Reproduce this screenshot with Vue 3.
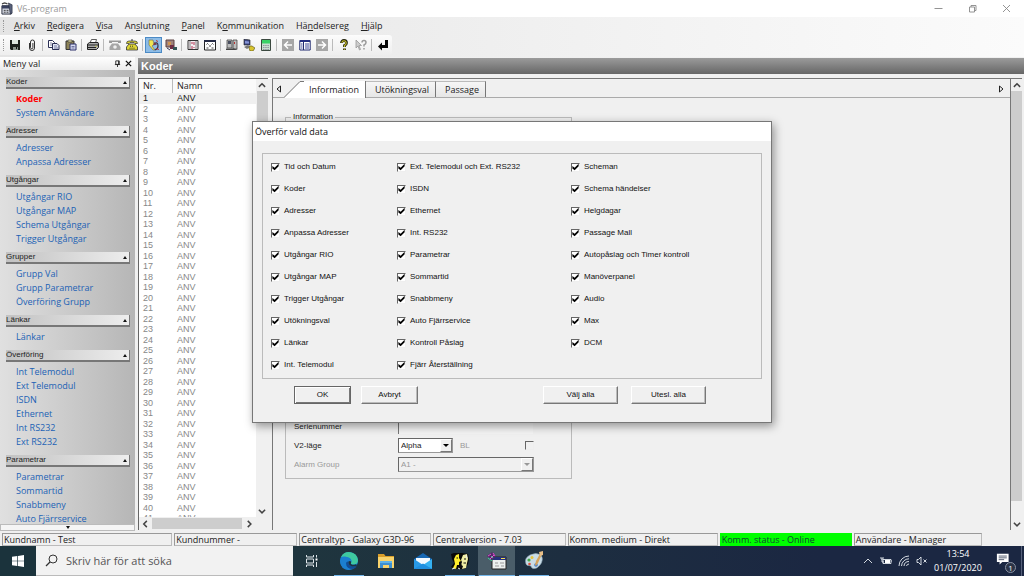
<script setup>
import { ref } from 'vue'

const menus = [
  ['', 'A', 'rkiv'], ['', 'R', 'edigera'], ['', 'V', 'isa'], ['An', 's', 'lutning'],
  ['', 'P', 'anel'], ['K', 'o', 'mmunikation'], ['Hä', 'n', 'delsereg'], ['', 'H', 'jälp'],
]

const sections = [
  { title: 'Koder', links: ['Koder', 'System Användare'] },
  { title: 'Adresser', links: ['Adresser', 'Anpassa Adresser'] },
  { title: 'Utgångar', links: ['Utgångar RIO', 'Utgångar MAP', 'Schema Utgångar', 'Trigger Utgångar'] },
  { title: 'Grupper', links: ['Grupp Val', 'Grupp Parametrar', 'Överföring Grupp'] },
  { title: 'Länkar', links: ['Länkar'] },
  { title: 'Överföring', links: ['Int Telemodul', 'Ext Telemodul', 'ISDN', 'Ethernet', 'Int RS232', 'Ext RS232'] },
  { title: 'Parametrar', links: ['Parametrar', 'Sommartid', 'Snabbmeny', 'Auto Fjärrservice'] },
]

const rows = Array.from({ length: 41 }, (_, i) => i + 1)

const columns = [
  ['Tid och Datum', 'Koder', 'Adresser', 'Anpassa Adresser', 'Utgångar RIO', 'Utgångar MAP', 'Trigger Utgångar', 'Utökningsval', 'Länkar', 'Int. Telemodul'],
  ['Ext. Telemodul och Ext. RS232', 'ISDN', 'Ethernet', 'Int. RS232', 'Parametrar', 'Sommartid', 'Snabbmeny', 'Auto Fjärrservice', 'Kontroll Påslag', 'Fjärr Återställning'],
  ['Scheman', 'Schema händelser', 'Helgdagar', 'Passage Mall', 'Autopåslag och Timer kontroll', 'Manöverpanel', 'Audio', 'Max', 'DCM'],
]
const picked = ref(columns.flat())
const selectAll = () => { picked.value = columns.flat() }
const clearAll = () => { picked.value = [] }

const mode = ref('Alpha')
const query = ref('')
</script>

<template>
  <div class="screen">
    <header class="titlebar">
      <svg class="appicon" viewBox="0 0 14 14">
        <path d="M1 4h10v9H1z" fill="#d4d8e2" stroke="#25293a" />
        <path d="M1 4h10v3H1z" fill="#38405e" />
        <path d="M8 1l4 2v9l-2 1z" fill="#59617a" stroke="#1d2233" stroke-width=".6" />
        <path d="M3 9h2M6 9h2M3 11h2M6 11h2" stroke="#333" />
        <path d="M1 2l3-1 3 1" fill="none" stroke="#444" stroke-width="1.300" />
      </svg>
      <span>V6-program</span>
      <div class="winbtns">
        <button aria-label="Minimera"><svg viewBox="0 0 9 9"><path d="M.5 4.500h8" /></svg></button>
        <button aria-label="Återställ"><svg viewBox="0 0 9 9"><path d="M1.500 3h5v5h-5zM3 3V1.500h5v5H6.500" /></svg></button>
        <button aria-label="Stäng"><svg viewBox="0 0 9 9"><path d="M1 1l7 7M8 1l-7 7" /></svg></button>
      </div>
    </header>

    <nav class="menubar">
      <i class="grip"></i>
      <button v-for="m in menus" :key="m.join('')">{{ m[0] }}<u>{{ m[1] }}</u>{{ m[2] }}</button>
    </nav>

    <div class="toolrow">
      <div class="toolbar">
        <i class="grip"></i>
        <button aria-label="Spara"><svg viewBox="0 0 12 12"><path d="M1 1h10v10H2l-1-1z" fill="#1c1f1c" /><path d="M3 1h6v4H3z" fill="#dfe6df" /><path d="M4 8h5v3H4z" fill="#8a938a" /><path d="M7 8h1v2H7z" fill="#111" /></svg></button>
        <button aria-label="Bifoga"><svg viewBox="0 0 12 12"><path d="M3.500 4v5a2.500 2.500 0 0 0 5 0V3a2 2 0 0 0-4 0v5.500a1.200 1.200 0 0 0 2.400 0V4" fill="none" stroke="#333" /></svg></button>
        <i class="sep"></i>
        <button aria-label="Kopiera"><svg viewBox="0 0 12 12"><path d="M.5 1.500h4l2 2v5h-6z" fill="#fff" stroke="#2a2f55" /><path d="M4.500 4.500H9l2 2v4H4.500z" fill="#dfe4f4" stroke="#2a2f55" /><path d="M2 4h2M2 6h2M6 7h3M6 9h4" stroke="#4a5280" stroke-width=".7" /></svg></button>
        <button aria-label="Klistra in"><svg viewBox="0 0 12 12"><path d="M1 2h8v8.500H1z" fill="#8d8357" stroke="#333" /><path d="M3 1h4v2H3z" fill="#e5dfa8" stroke="#333" stroke-width=".6" /><path d="M5 5h6v6H5z" fill="#d8dcf3" stroke="#2b2f68" /><path d="M6.500 7.500h3M6.500 9h3" stroke="#2b2f68" stroke-width=".6" /></svg></button>
        <i class="sep"></i>
        <button aria-label="Skriv ut"><svg viewBox="0 0 12 12"><path d="M3 4l1.500-3.500h5L8.500 4" fill="#fff" stroke="#333" stroke-width=".8" /><path d="M.5 5l2-1.500h8.500l.5 1.500v3.500l-2 2H.5z" fill="#aaa" stroke="#222" /><path d="M1 6h10M1 8.500h8" stroke="#222" /><path d="M8 7.200h2" stroke="#c8c860" /></svg></button>
        <i class="sep"></i>
        <button aria-label="Koppla ned"><svg viewBox="0 0 12 12"><path d="M0 1.500h12V4H9V3H3v1H0z" fill="#999" /><path d="M3 4.500h6l2.500 3.500v3H.5V8z" fill="#a6a6a6" /><circle cx="6" cy="8" r="1.800" fill="#eee" /></svg></button>
        <button aria-label="Ring upp"><svg viewBox="0 0 12 12"><path d="M.5 4.500Q.5 2 3 2h6q2.500 0 2.500 2.500H9l-1-1H4l-1 1z" fill="#d9d330" stroke="#333" stroke-width=".7" /><path d="M3 5h6l2.500 3v3H.5V8z" fill="#ded633" stroke="#333" stroke-width=".8" /><path d="M4 7.200h4M3.500 9.200h5" stroke="#333" stroke-dasharray="1 1" /><path d="M6 0v2" stroke="#333" /></svg></button>
        <i class="sep"></i>
        <button class="on" aria-label="Anslut"><svg viewBox="0 0 12 12"><path d="M1 1h4l1 4-2 2 3 4H5L1 6z" fill="#f0e451" stroke="#665" stroke-width=".6" /><path d="M6 5q4-3 4 2 0 3-3 4" fill="none" stroke="#3b3144" stroke-width="1.200" /><path d="M5 6.500L6.500 3 9 5.500z" fill="#7b3a48" /><path d="M8 1.500l2 1M8 9.500l3 1" stroke="#b33" /></svg></button>
        <button aria-label="Enheter"><svg viewBox="0 0 12 12"><path d="M1 1h8v7H1z" fill="#a0837c" stroke="#5a4040" /><path d="M3 3h3v3H3z" fill="#cf9450" /><path d="M5 6h4v4H5z" fill="#6e2e45" /><path d="M8 8h4v3H8z" fill="#355" /><path d="M2 9l3 2" stroke="#335" /></svg></button>
        <i class="sep"></i>
        <button aria-label="Logg"><svg viewBox="0 0 12 12"><path d="M1 1.500h10v9H1z" fill="#f4eef2" stroke="#333" /><path d="M3 2v8M9 2v8" stroke="#555" stroke-width=".7" /><path d="M5 3v2M7 3v3M5 7v3M7 8v1" stroke="#b23350" /></svg></button>
        <button aria-label="Fönster"><svg viewBox="0 0 12 12"><path d="M.5 1.500h11v9.500H.5z" fill="#fff" stroke="#222" /><path d="M0 1h12v2H0z" fill="#252a45" /><path d="M2.500 5.500l1-1 1 1M7.500 5.500l1-1 1 1M2.500 9h2M7.500 9h2M5 7h2" fill="none" stroke="#444" /></svg></button>
        <i class="sep"></i>
        <button aria-label="Centralapparat"><svg viewBox="0 0 12 12"><path d="M1 1h5v8H1zM7 1h4v9H7z" fill="#bcbcbc" stroke="#333" stroke-width=".7" /><path d="M2 2h3v3H2z" fill="#4a4f60" /><path d="M8 3h1v2H8z" fill="#b33" /><path d="M0 9.500h8l4 1.500H0z" fill="#444" /></svg></button>
        <button aria-label="Fjärranslutning"><svg viewBox="0 0 12 12"><path d="M1 0l6 1v5L1 6z" fill="#3d4780" stroke="#222" stroke-width=".6" /><path d="M2 2l4 .5v2L2 4.500z" fill="#8795d8" /><path d="M1 8l4-2 2 2-3 2z" fill="#777" /><path d="M6 9q0-3 3-2l3 2-2 3H7z" fill="#d8c42d" stroke="#554c11" stroke-width=".6" /></svg></button>
        <button aria-label="Knappsats"><svg viewBox="0 0 12 12"><path d="M1.500.5h9v11h-9z" fill="#c9ded0" stroke="#3b493f" /><path d="M2 1h8v3.500H2z" fill="#39d265" /><path d="M3 6.500h6M3 8.500h6M3 10.500h6" stroke="#778" stroke-width=".7" stroke-dasharray="1.500 .7" /></svg></button>
        <i class="sep"></i>
        <button aria-label="Föregående"><svg viewBox="0 0 12 12"><path d="M0 0h12v12H0z" fill="#a7a7a7" /><path d="M10 6H3M6 2.500L2.500 6 6 9.500" fill="none" stroke="#fff" stroke-width="1.500" /></svg></button>
        <button aria-label="Lista"><svg viewBox="0 0 12 12"><path d="M.8 1.500h10.400v9.500H.8z" fill="#fff" stroke="#202a70" /><path d="M1 1h10v2H1z" fill="#252f80" /><path d="M4.500 3v8" stroke="#202a70" /><path d="M2 5h1.500M2 7h1.500M2 9h1.500M6 5h4M6 7h4M6 9h4" stroke="#3c4696" /></svg></button>
        <button aria-label="Nästa"><svg viewBox="0 0 12 12"><path d="M0 0h12v12H0z" fill="#a7a7a7" /><path d="M2 6h7M6 2.500L9.500 6 6 9.500" fill="none" stroke="#fff" stroke-width="1.500" /></svg></button>
        <i class="sep"></i>
        <button aria-label="Hjälp"><svg viewBox="0 0 12 12"><path d="M3.500 4Q3.500 1.500 6 1.500T8.500 4Q8.500 5.500 6.500 6.500V8M6.500 9.500v1.500" fill="none" stroke="#262611" stroke-width="2.800" /><path d="M3.800 3.800Q4 1.800 6 1.800T8.200 4Q8.200 5.500 6.500 6.500V8M6.500 9.800v1" fill="none" stroke="#c9c02d" stroke-width="1.100" /></svg></button>
        <button aria-label="Vad är detta?"><svg viewBox="0 0 12 12"><path d="M1 1v8l2-2 1.500 4 1-.5L4 6.500h2.500z" fill="#ccc" stroke="#999" stroke-width=".8" /><path d="M7 3.500Q7 1.500 9 1.500t2 2Q11 5 9 6v1.500M9 9v1.500" fill="none" stroke="#9a9a9a" stroke-width="1.500" /></svg></button>
        <i class="sep"></i>
        <button aria-label="Retur"><svg viewBox="0 0 12 12"><path d="M8 1h3v8H5v2.500L1 7.500l4-4V6h3z" fill="#050505" /></svg></button>
      </div>
    </div>

    <main class="work">
      <aside class="side">
        <div class="sidehead">
          <span>Meny val</span>
          <button aria-label="Fäst"><svg viewBox="0 0 8 8"><path d="M2 1h4v4H2zM1 5.200h6M4 5v3M5.200 1v4" fill="none" stroke="#222" /></svg></button>
          <button aria-label="Stäng meny"><svg viewBox="0 0 8 8"><path d="M1 1l6 6M7 1L1 7" stroke="#111" stroke-width="1.500" /></svg></button>
        </div>
        <nav class="sidebody">
          <section v-for="s in sections" :key="s.title">
            <button class="sechead">{{ s.title }}<i class="up"></i></button>
            <a v-for="l in s.links" :key="l" href="#" :class="{ current: s.title === 'Koder' && l === 'Koder' }">{{ l }}</a>
          </section>
        </nav>
        <button class="more" aria-label="Bläddra ned"><i class="down"></i></button>
      </aside>

      <section class="area">
        <h1>Koder</h1>
        <div class="panes">
          <div class="listpane">
            <div class="listview">
              <table>
                <thead><tr><th>Nr.</th><th>Namn</th></tr></thead>
                <tbody>
                  <tr v-for="n in rows" :key="n" :class="{ sel: n === 1 }"><td>{{ n }}</td><td>ANV</td></tr>
                </tbody>
              </table>
            </div>
            <div class="vscroll">
              <svg viewBox="0 0 8 8"><path d="M1.500 5.500L4 3l2.500 2.500" /></svg>
              <div class="track"><i class="thumb short"></i></div>
              <svg viewBox="0 0 8 8"><path d="M1.500 3L4 5.500 6.500 3" /></svg>
            </div>
            <div class="hscroll">
              <svg viewBox="0 0 8 8"><path d="M5.500 1.500L3 4l2.500 2.500" /></svg>
              <i class="bar"></i>
              <svg viewBox="0 0 8 8"><path d="M3 1.500L5.500 4 3 6.500" /></svg>
            </div>
          </div>

          <div class="detail">
            <div class="sheet">
              <div class="tabs">
                <button class="tabarrow" aria-label="Föregående flik"><svg viewBox="0 0 6 8"><path d="M4.500 1v6L1 4z" /></svg></button>
                <button class="tab active"><svg class="slant" viewBox="0 0 20 17"><path d="M0 17L17 0h3v17z" fill="#fff" /><path d="M0 16.500L16 .5h4" fill="none" stroke="#777" /></svg><span>Information</span></button>
                <button class="tab">Utökningsval</button>
                <button class="tab">Passage</button>
                <span class="fill"></span>
                <button class="tabarrow end" aria-label="Nästa flik"><svg viewBox="0 0 6 8"><path d="M1.500 1v6L5 4z" /></svg></button>
              </div>
              <fieldset>
                <legend>Information</legend>
                <div class="field">
                  <label for="serial">Serienummer</label>
                  <input id="serial" type="text" class="serial" />
                </div>
                <div class="field">
                  <label for="mode">V2-läge</label>
                  <span class="combo small"><select id="mode" v-model="mode"><option>Alpha</option></select><i><b class="down"></b></i></span>
                  <label for="bl" class="off bl">BL</label>
                  <input id="bl" type="checkbox" class="box" disabled />
                </div>
                <div class="field">
                  <label for="group" class="off">Alarm Group</label>
                  <span class="combo dim"><select id="group" disabled><option>A1 -</option></select><i><b class="down"></b></i></span>
                </div>
              </fieldset>
            </div>
            <div class="vscroll">
              <svg viewBox="0 0 8 8"><path d="M1.500 5.500L4 3l2.500 2.500" /></svg>
              <div class="track"><i class="thumb long"></i></div>
              <svg viewBox="0 0 8 8"><path d="M1.500 3L4 5.500 6.500 3" /></svg>
            </div>
          </div>
        </div>
      </section>
    </main>

    <footer class="status">
      <span>Kundnamn - Test</span>
      <span>Kundnummer -</span>
      <span>Centraltyp - Galaxy G3D-96</span>
      <span>Centralversion - 7.03</span>
      <span>Komm. medium - Direkt</span>
      <span class="online">Komm. status - Online</span>
      <span>Användare - Manager</span>
    </footer>

    <div class="taskbar">
      <button class="start" aria-label="Start"><svg viewBox="0 0 12 12"><path d="M0 1.700L5.300 1v4.700H0zM6 .9L12 0v5.700H6zM0 6.300h5.300V11L0 10.300zM6 6.300h6V12l-6-.9z" fill="#fff" /></svg></button>
      <label class="search">
        <svg viewBox="0 0 13 13"><circle cx="8" cy="5" r="4" fill="none" stroke="#333" /><path d="M5 8L1 12" stroke="#333" stroke-width="1.200" /></svg>
        <input v-model="query" type="text" placeholder="Skriv här för att söka" aria-label="Sök" />
      </label>
      <button class="task" aria-label="Aktivitetsvy"><svg class="tv" viewBox="0 0 14 14"><path d="M1.500 1v2h7V1M1.500 13v-2h7v2M1.500 5h7v4h-7zM11.500 1v2.500M11.500 8v5" fill="none" stroke="#dde4e8" /><path d="M10.500 4.500h2v2h-2z" fill="#fff" /></svg></button>
      <button class="task run" aria-label="Edge"><svg viewBox="0 0 20 20"><circle cx="10" cy="10" r="9" fill="#1683d4" /><path d="M2 6A9 9 0 0 1 19 9q0 4.500-5 4.500-2.500 0-2-1.500 1.500-3-2-5Q6 4.500 2 6z" fill="#3fc9a0" /><path d="M1 10Q3 5 8 6q5 1 4.500 5-3-3-6 1.500-.5 4.500 5 6.300Q2 20 1 10z" fill="#1c7fd0" /><path d="M7 12q0 6 7 6 3-1.200 4-3.500-3 1.500-6 .5-3-1-2.500-4.500Q7.500 10 7 12z" fill="#124c96" /><path d="M9.500 10.500q2-1 2.700.5-1 2 .5 2.500 2 .6 3.800-.3l2 .8Q16 16.500 12 15q-3-1.500-2.500-4.500z" fill="#1e3240" /></svg></button>
      <button class="task" aria-label="Utforskaren"><svg viewBox="0 0 20 20"><path d="M2 3h6l1.500 2H18v4H2z" fill="#d99e2b" /><path d="M2 6h16v11H2z" fill="#f8d36c" /><path d="M4 11h12v6h-3v-3H7v3H4z" fill="#3d8fd1" /><path d="M4 10h12v2H4z" fill="#5db2e8" /></svg></button>
      <button class="task" aria-label="E-post"><svg viewBox="0 0 20 20"><path d="M1 8l9-6 9 6v10H1z" fill="#1767b2" /><path d="M3 7h14v7H3z" fill="#f4faff" /><path d="M1 8l9 6-9 4z" fill="#2899e6" /><path d="M19 8l-9 6 9 4z" fill="#35b1f1" /><path d="M1 18l9-5.500L19 18z" fill="#1f8fe0" /></svg></button>
      <button class="task run" aria-label="Galaxy"><svg viewBox="0 0 20 20"><path d="M1 3l3-1h8l6 1 1 5-1 5-3 5H6l-5-2 3-4-2-4z" fill="#080808" /><path d="M6 4l3-1v4l2 3-2 1v3H7l-1 4-3-1 2-4-1-5z" fill="#ffee2c" /><path d="M13 4l4-1 1 5-1 4-1 5-4 1 1-3-2-1 1-3-1-2z" fill="#f1efa5" /><path d="M6.500 7H8M14 8h2M13.500 12H16M10 3v3M11 13v4" stroke="#111" /><path d="M2 18l3-1M8 17l2 1M16 4l1 3" stroke="#eee" /></svg></button>
      <button class="task run cur" aria-label="V6-program"><svg viewBox="0 0 20 20"><path d="M5 6h14v12H5z" fill="#edf0ef" stroke="#222" /><path d="M5 6h14v3H5z" fill="#27317c" /><path d="M8 12h3M13 12h4M8 15h4M14 15h3" stroke="#999" /><path d="M0 5l5-4 4 4-4 4z" fill="#542b68" /><path d="M1 5l3-2M3 8l4-4M6 2l2 3" stroke="#e050d0" /><path d="M1 7l4 3M4 5l2 2" stroke="#40d095" /><path d="M14 7.500h4" stroke="#f4e050" /></svg></button>
      <button class="task run" aria-label="Paint"><svg viewBox="0 0 20 20"><path d="M2 13Q0 7 6 4t11 0q3 5-1 10-4 5-8 3-1-3-3-2.500T2 13z" fill="#c9dce6" stroke="#8fa9b8" stroke-width=".6" /><circle cx="5" cy="9" r="1.600" fill="#47a84a" /><circle cx="8" cy="6.500" r="1.500" fill="#e6c53e" /><circle cx="5.500" cy="13" r="1.300" fill="#d8503e" /><circle cx="12" cy="14" r="1.800" fill="#3b78ca" /><path d="M17 1l1 2-4 9-2 3-1-1 1-4z" fill="#d5a35b" /><path d="M15 1l4-1v4l-3 1z" fill="#e8bf87" /></svg></button>
      <span class="fill"></span>
      <div class="tray">
        <svg viewBox="0 0 12 12"><path d="M2 8l4-4 4 4" /></svg>
        <svg viewBox="0 0 12 12"><path d="M3 4.500h8v4H3zM11 6h1" /><path d="M5 5h5v3H5z" fill="#fff" stroke="none" /><path d="M1 2v2h2V2M2 4v3h2" /></svg>
        <svg viewBox="0 0 12 12"><path d="M1 11A10 10 0 0 1 11 1M3.500 11A7.500 7.500 0 0 1 11 3.800M6 11a5 5 0 0 1 5-4.500M8.500 11A2.500 2.500 0 0 1 11 9" /></svg>
        <svg viewBox="0 0 12 12"><path d="M1 4.500h1.500L5 2v8L2.500 7.500H1zM7.500 4.500l3 3M10.500 4.500l-3 3" /></svg>
      </div>
      <div class="clock"><time>13:54</time><time>01/07/2020</time></div>
      <button class="notes" aria-label="Aviseringar"><svg viewBox="0 0 20 20"><path d="M1 2h13v9H7l-3 3v-3H1z" fill="#fff" /><path d="M3 4.500h9M3 6.500h9M3 8.500h6" stroke="#1b2742" stroke-width=".8" /></svg><b>1</b></button>
    </div>

    <div class="dialog" role="dialog" aria-labelledby="dlgtitle">
      <h2 id="dlgtitle">Överför vald data</h2>
      <div class="group">
        <div v-for="(c, i) in columns" :key="i" class="col">
          <label v-for="t in c" :key="t"><input v-model="picked" type="checkbox" class="box" :value="t" />{{ t }}</label>
        </div>
      </div>
      <div class="actions">
        <button class="btn default">OK</button>
        <button class="btn">Avbryt</button>
        <span class="fill"></span>
        <button class="btn wide" @click="selectAll">Välj alla</button>
        <button class="btn wide" @click="clearAll">Utesl. alla</button>
      </div>
    </div>
  </div>
</template>

<style>
html, body { background: #f0f0f0; overflow: hidden; }
</style>

<style scoped>
* { box-sizing: border-box; }
button, input, select { font: inherit; color: inherit; margin: 0; }
button { border: 0; background: none; padding: 0; white-space: nowrap; }
svg { display: block; }
.screen {
  position: relative;
  display: flex;
  flex-direction: column;
  height: 100vh;
  background: #f0f0f0;
  color: #222;
  font: 9px/12px "Open Sans", "Noto Sans", sans-serif;
}
.fill { flex: 1; }

.titlebar { display: flex; align-items: center; height: 17px; padding: 0 1px; background: #fff; color: #999; }
.appicon { width: 13px; height: 13px; margin-right: 3px; }
.winbtns { display: flex; margin-left: auto; }
.winbtns button { width: 34px; display: grid; place-items: center; }
.winbtns svg { width: 9px; height: 9px; fill: none; stroke: #888; stroke-width: .9; }

.menubar { display: flex; align-items: center; height: 18px; gap: 12px; padding-left: 3px; background: linear-gradient(90deg, #e4e4e4, #fbfbfb); }
.grip { width: 1px; height: 12px; border-left: 1px dotted #999; }
.menubar .grip { margin-right: -2px; }
.menubar u { text-underline-offset: 1px; }

.toolrow { height: 22px; background: linear-gradient(90deg, #e4e4e4, #fbfbfb); }
.toolbar { display: flex; align-items: center; width: max-content; height: 20px; padding: 0 1px 0 3px; background: linear-gradient(#fcfcfc, #eee); border-radius: 0 3px 3px 0; }
.toolbar .grip { margin-right: 2px; }
.toolbar button { display: grid; place-items: center; width: 17px; height: 16px; }
.toolbar button svg { width: 12px; height: 12px; }
.toolbar .on { background: #8dbce6; border: 1px solid #4b8ac5; }
.sep { width: 1px; height: 12px; margin: 0 2px; background: #bbb; }

.work { flex: 1; min-height: 0; display: flex; }
.side { width: 135px; margin-right: 3px; display: flex; flex-direction: column; background: linear-gradient(90deg, #e0e0e0, #b6b6b6); }
.sidehead { display: flex; align-items: center; gap: 4px; height: 13px; flex: none; padding: 0 3px; background: linear-gradient(#fff, #ececec); font-size: 9px; }
.sidehead span { flex: 1; }
.sidehead svg { width: 7px; height: 7px; }
.sidebody { flex: 1; min-height: 0; overflow: hidden; padding: 7px 5px 0 6px; }
.sidebody section { display: flex; flex-direction: column; margin-bottom: 6px; }
.sidebody a { margin-left: 10px; line-height: 14px; color: #1c62b5; text-decoration: none; }
.sidebody a.current { color: #f00; font-weight: 700; }
.sechead {
  display: flex; align-items: center; justify-content: space-between;
  height: 12px; margin-bottom: 3px; padding-right: 2px;
  background: linear-gradient(90deg, #c2c2c2, #ededed);
  border-right: 1px solid #777; border-bottom: 2px solid #777;
  font: 8px/10px "Liberation Sans", Arial, sans-serif;
}
.up, .down { width: 0; height: 0; border: 2px solid transparent; }
.up { border-bottom: 3px solid #111; border-top: 0; }
.down { border-top: 3px solid #111; border-bottom: 0; }
.more { display: grid; place-items: center; height: 7px; flex: none; background: #f5f5f5; border: 1px solid #bbb; }

.area { flex: 1; min-width: 0; display: flex; flex-direction: column; }
h1 { margin: 1px 0 4px; padding-left: 3px; height: 16px; flex: none; background: linear-gradient(#9b9b9b, #666); color: #fff; font: bold 11px/16px "Liberation Sans", Arial, sans-serif; }
.panes { flex: 1; min-height: 0; display: flex; gap: 4px; padding: 0 2px 1px 0; }

.listpane { width: 130px; display: grid; grid-template: 1fr 13px / 1fr 12px; border-left: 1px solid #666; border-top: 1px solid #666; background: #f0f0f0; }
.listview { min-height: 0; overflow: hidden; background: #fff; height: 100%; contain: size; }
table, thead, tbody { display: block; }
tr { display: grid; grid-template-columns: 33px 1fr; }
th, td { padding: 0 4px; text-align: left; font-weight: 400; }
th { height: 14px; line-height: 13px; background: #fafafa; }
th + th { border-left: 1px solid #bbb; }
tbody { font-family: "Liberation Sans", Arial, sans-serif; line-height: 1.167; color: #888; }
td + td { padding-left: 5px; }
.sel { background: #f0f0f0; color: #222; }
.vscroll { display: flex; flex-direction: column; align-items: center; background: #f0f0f0; }
.vscroll svg, .hscroll svg { width: 10px; height: 12px; flex: none; fill: none; stroke: #444; stroke-width: 1.200; }
.track { flex: 1; width: 11px; }
.thumb { display: block; background: #cdcdcd; }
.short { height: 10%; }
.long { height: 96%; }
.hscroll { grid-column: 1 / 3; display: flex; align-items: center; padding: 0 14px 0 1px; gap: 2px; }
.bar { flex: 1; height: 11px; background: #cdcdcd; }

.detail { flex: 1; min-width: 0; display: flex; border: 1px solid #777; border-width: 1px 0 0 1px; }
.sheet { flex: 1; min-width: 0; border-right: 1px solid #777; }
.tabs { display: flex; align-items: flex-end; height: 19px; border-bottom: 1px solid #aaa; font-size: 9px; }
.tabarrow { width: 11px; height: 17px; padding-left: 3px; }
.tabarrow.end { width: 14px; padding-left: 2px; }
.tabarrow svg { width: 6px; height: 8px; fill: none; stroke: #222; }
.tab { height: 16px; padding: 0 6px 0 9px; border-right: 1px solid #777; border-top: 1px solid #bbb; background: linear-gradient(#f6f6f6, #e6e6e6); }
.tab.active { display: flex; align-items: center; height: 17px; margin-bottom: -1px; padding: 0 6px 0 0; border-top: 0; background: linear-gradient(90deg, transparent 20px, #fff 20px); }
.slant { width: 20px; height: 17px; margin-right: 5px; }

fieldset {
  display: flex; flex-direction: column; justify-content: flex-end; gap: 4px;
  width: 287px; height: 368px; margin: 13px 0 0 12px; padding: 0 8px 6px;
  border: 1px solid #bbb; font: 8px/12px "Liberation Sans", Arial, sans-serif;
}
legend { margin-left: -3px; padding: 0 2px; }
.field { display: flex; align-items: center; height: 15px; }
.field label:first-child { width: 104px; }
.off { color: #999; }
.serial { width: 135px; height: 14px; border: 0; border-left: 1px solid #777; background: #f4f4f4; }
.combo { position: relative; display: flex; width: 136px; height: 15px; border: 1px solid; border-color: #666 #999 #999 #666; background: #fff; }
.combo.small { width: 55px; }
.combo select { appearance: none; width: 100%; padding: 0 0 0 2px; border: 0; background: transparent; line-height: 13px; opacity: 1; }
.combo.dim { background: #f0f0f0; color: #999; }
.combo i { position: absolute; right: 0; top: 0; bottom: 0; width: 12px; display: grid; place-items: center; background: #f0f0f0; border: 1px solid; border-color: #fff #777 #777 #fff; pointer-events: none; }
.combo .down { border-width: 3px; border-bottom-width: 0; border-top-color: #000; }
.combo.dim .down { border-top-color: #999; }
.bl { flex: 1; padding-left: 7px; }
.field .box { margin-right: 29px; }

.box { appearance: none; position: relative; width: 9px; height: 9px; flex: none; border: 1px solid; border-color: #666 #eee #eee #666; background: #fff; }
.box:disabled { background: #f0f0f0; }
.box:checked::before { content: ""; display: block; width: 7px; height: 7px; background: #000; clip-path: polygon(5% 35%, 38% 62%, 95% 5%, 95% 40%, 38% 98%, 5% 70%); }

.status { display: grid; grid-template-columns: 172fr 125fr 134fr 134fr 152fr 134fr 130fr 40fr; gap: 0; height: 15px; padding: 2px 0 0 2px; }
.status span { margin-right: 2px; padding-left: 1px; border: 1px solid #bbb; border-top-color: #999; border-left-color: #999; line-height: 12px; white-space: nowrap; overflow: hidden; }
.status .online { background: #0f0; border-color: #0f0; color: #143; }

.taskbar { display: flex; height: 30px; flex: none; background: linear-gradient(90deg, #1f353e 30%, #1b2742 80%); color: #fff; }
.start { display: grid; place-items: center; width: 36px; background: #1b333c; }
.start svg { width: 12px; height: 12px; }
.search { display: flex; align-items: center; gap: 8px; width: 257px; padding-left: 9px; background: #f2f2f2; border-bottom: 1px solid #bbb; }
.search svg { width: 13px; height: 13px; }
.search input { flex: 1; min-width: 0; padding: 0; border: 0; outline: 0; background: none; color: #333; font-size: 11px; line-height: 16px; }
.search input::placeholder { color: #555; opacity: 1; }
.task { display: grid; place-items: center; width: 37px; border-bottom: 1px solid transparent; }
.task svg { width: 20px; height: 20px; }
.task .tv { width: 14px; height: 14px; }
.run { background: linear-gradient(#76b9ed, #76b9ed) center bottom / 30px 1px no-repeat border-box; }
.cur { background: linear-gradient(#76b9ed, #76b9ed) center bottom / 36px 1px no-repeat border-box, #4a5d69; }
.tray { display: flex; align-items: center; gap: 6px; }
.tray svg { width: 12px; height: 12px; fill: none; stroke: #e8ecf2; stroke-width: .9; }
.clock { display: flex; flex-direction: column; justify-content: center; width: 60px; text-align: center; line-height: 14px; }
.notes { position: relative; width: 34px; margin-right: 2px; border-right: 1px solid #56607a; display: grid; place-items: center; }
.notes svg { width: 18px; height: 18px; }
.notes b { position: absolute; right: 5px; bottom: 3px; width: 11px; height: 11px; border: 1px solid #8a93a5; border-radius: 50%; background: #2b3447; font: 8px/9px "Open Sans", sans-serif; }

.dialog {
  position: absolute; left: 252px; top: 121px; width: 520px;
  border: 1px solid #777; background: #f0f0f0; color: #111;
  box-shadow: 2px 3px 9px rgba(0, 0, 0, .4);
  font: 8px/12px "Liberation Sans", Arial, sans-serif;
}
h2 { margin: 0; padding-left: 2px; height: 19px; background: #fff; font: 400 9px/19px "Open Sans", "Noto Sans", sans-serif; }
.group { display: grid; grid-template-columns: 126px 174px 1fr; margin: 12px 9px 0; padding: 2px 8px; border: 1px solid #bbb; }
.col { display: flex; flex-direction: column; }
.col label { display: flex; align-items: center; gap: 4px; height: 22px; white-space: nowrap; }
.actions { display: flex; gap: 10px; padding: 7px 65px 18px 41px; }
.btn { width: 57px; height: 18px; border: 1px solid; border-color: #fff #777 #777 #fff; background: #f0f0f0; box-shadow: inset -1px -1px #bbb; }
.btn.default { border-color: #666; box-shadow: inset 1px 1px #fff, inset -1px -1px #777; }
.btn.wide { width: 75px; }
.btn.wide + .wide { margin-left: 3px; }
</style>
